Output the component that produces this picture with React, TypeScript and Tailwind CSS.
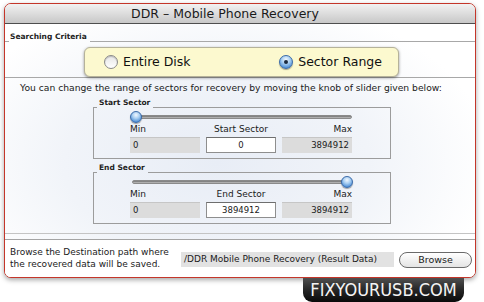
import React from "react";

const knobCls =
  "rounded-full border border-[#3a6aa8] bg-[radial-gradient(circle_at_50%_30%,#f2f8ff_0%,#a9cff2_40%,#4f8fd6_80%,#3a74c0_100%)] shadow-[0_1px_1px_rgba(0,0,0,0.35)]";

function Radio({ checked, label }: { checked: boolean; label: string }) {
  return (
    <div className="flex items-center">
      {checked ? (
        <div className={`w-[14px] h-[14px] flex items-center justify-center ${knobCls}`}>
          <div className="w-[4px] h-[4px] rounded-full bg-[#1a2a40]" />
        </div>
      ) : (
        <div className="w-[14px] h-[14px] rounded-full border border-[#8a8a8a] bg-gradient-to-b from-[#e6e6e6] to-white shadow-[inset_0_1px_1px_rgba(0,0,0,0.2)]" />
      )}
      <span className="ml-[5px] text-[12.5px] leading-[16px] text-[#111]">{label}</span>
    </div>
  );
}

function GroupBox({ title, value, atMax }: { title: string; value: string; atMax: boolean }) {
  return (
    <div className="ml-[88px] w-[298px] flex flex-col">
      <div className="h-[14px] flex items-end">
        <div className="w-[4px] h-[1px] bg-[#9c9c9c]" />
        <span className="ml-[2px] mr-[3px] text-[7.5px] leading-[10px] font-bold text-[#222]">{title}</span>
        <div className="flex-1 h-[1px] bg-[#9c9c9c]" />
      </div>
      <div className="h-[51px] border-l border-r border-b border-[#9c9c9c] pl-[36px] pt-[3px]">
        <div className="relative w-[222px] h-[13px]">
          <div className="absolute left-[2px] right-0 top-[4px] h-[4px] rounded-full bg-gradient-to-b from-[#6f6f6f] to-[#c4c4c4] border border-[#8a8a8a]" />
          <div className={`absolute top-0 w-[12px] h-[12px] ${atMax ? "right-[-1px]" : "left-0"} ${knobCls}`} />
        </div>
        <div className="grid grid-cols-3 gap-[6px] w-[222px] h-[11px] text-[9px] leading-[11px] text-[#1a1a1a]">
          <span>Min</span>
          <span className="text-center">{title}</span>
          <span className="text-right">Max</span>
        </div>
        <div className="mt-[2px] grid grid-cols-3 gap-[6px] w-[222px] h-[16px] text-[8.5px] leading-[14px] text-[#1a1a1a]">
          <div className="bg-[#dcdcdc] border-t border-[#c6c6c6] pl-[3px]">0</div>
          <div className="bg-white border border-[#8e8e8e] border-t-[#6e6e6e] text-center">{value}</div>
          <div className="bg-[#dcdcdc] border-t border-[#c6c6c6] pr-[3px] text-right">3894912</div>
        </div>
      </div>
    </div>
  );
}

export default function App() {
  return (
    <div className="w-[484px] h-[302px] bg-white overflow-hidden font-['DejaVu_Sans',sans-serif]">
      <div className="pt-[3px] pl-[4px]">
        <div className="w-[472px] h-[275px] border border-[#c4362a] rounded-[7px] overflow-hidden flex flex-col bg-white shadow-[0_2px_5px_rgba(0,0,0,0.35)]">
          <div className="h-[20px] shrink-0 border-b border-[#4e4e4e] bg-gradient-to-b from-[#f2f2f2] to-[#c8c8c8] pr-[30px] text-center text-[12.5px] leading-[19px] text-[#1a1a1a]">
            DDR – Mobile Phone Recovery
          </div>
          <div className="flex-1 flex flex-col bg-[radial-gradient(ellipse_65%_75%_at_45%_55%,#e8edf6_0%,#f1f4f9_50%,#ffffff_90%)]">
            <div className="h-[18px] flex items-end">
              <div className="w-[4px] h-[1px] bg-[#a8a8a8]" />
              <span className="ml-[1px] mr-[3px] text-[7.5px] leading-[10px] font-bold text-[#222]">Searching Criteria</span>
              <div className="flex-1 h-[1px] bg-[#a8a8a8]" />
            </div>
            <div className="h-[36px] border-b border-[#a8a8a8] pt-[5px]">
              <div className="ml-[79px] w-[315px] h-[30px] rounded-[6px] border border-[#b5b29a] bg-[#fcf9cf] shadow-[0_1px_3px_rgba(0,0,0,0.4)] flex items-center justify-between pl-[19px] pr-[16px]">
                <Radio checked={false} label="Entire Disk" />
                <Radio checked={true} label="Sector Range" />
              </div>
            </div>
            <div className="mt-[4px] pl-[15px] text-[9.2px] leading-[12px] text-[#1a1a1a] whitespace-nowrap">
              You can change the range of sectors for recovery by moving the knob of slider given below:
            </div>
            <GroupBox title="Start Sector" value="0" atMax={false} />
            <GroupBox title="End Sector" value="3894912" atMax={true} />
            <div className="mt-[9px] h-[1px] bg-[#c4c4c4]" />
            <div className="mt-[5px] h-[1px] bg-[#a4a4a4]" />
            <div className="h-[37px] bg-white flex items-start pt-[6px]">
              <div className="w-[171px] pl-[5px] text-[9px] leading-[12px] text-[#1a1a1a]">
                Browse the Destination path where the recovered data will be saved.
              </div>
              <div className="ml-[5px] mt-[6px] w-[213px] h-[15px] bg-[#e2e2e2] pl-[3px] text-[9px] leading-[15px] text-[#1a1a1a] whitespace-nowrap overflow-hidden">
                /DDR Mobile Phone Recovery (Result Data)
              </div>
              <div className="ml-[5px] mt-[6px] w-[73px] h-[16px] rounded-full border border-[#6a6a6a] bg-gradient-to-b from-white to-[#e4e4e4] text-center text-[9.5px] leading-[14px] text-[#1a1a1a]">
                Browse
              </div>
            </div>
          </div>
        </div>
      </div>
      <div className="flex justify-end pr-[20px]">
        <div className="w-[161px] h-[24px] rounded-b-[9px] bg-gradient-to-b from-[#505050] via-[#262626] to-[#0a0a0a] text-center text-[#f4f4f4] text-[18px] leading-[24px] font-['Liberation_Sans_Narrow','DejaVu_Sans_Condensed',sans-serif]">
          FIXYOURUSB.COM
        </div>
      </div>
    </div>
  );
}
